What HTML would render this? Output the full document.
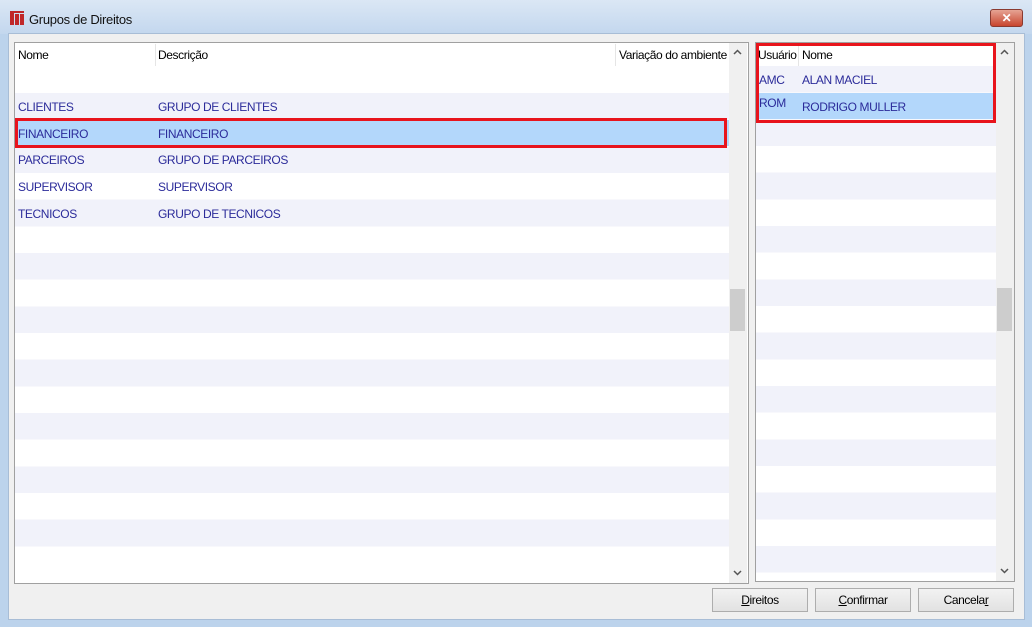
<!DOCTYPE html>
<html><head><meta charset="utf-8"><style>
*{margin:0;padding:0;box-sizing:border-box}
body{width:1032px;height:627px;overflow:hidden;background:#bcd3ec;font-family:"Liberation Sans",sans-serif;font-size:12px;position:relative;letter-spacing:-0.4px}
.a{position:absolute}
.title{left:0;top:0;width:1032px;height:34px;background:linear-gradient(#dbe7f5,#c3d7ee)}
.client{left:8px;top:33px;width:1017px;height:587px;background:#f0f0f0;border:1px solid #a8bdd6}
.grid{background:#fff;border:1px solid #a0a0a0}
.stripe{background:repeating-linear-gradient(#f1f2fa 0,#f1f2fa 26.67px,#fff 26.67px,#fff 53.33px)}
.t{position:absolute;color:#2b2b9a;font-size:12px;white-space:nowrap}
.h{position:absolute;color:#000;font-size:12px;white-space:nowrap}
.sb{background:#f0f0f0}
.thumb{background:#cdcdcd}
.btn{top:588px;height:24px;width:96px;background:linear-gradient(#f2f2f2,#e2e2e2);border:1px solid #adadad;text-align:center;line-height:22px;color:#000}
.red{border:3px solid #e8141c}
.sel{background:#b3d7fb}
</style></head><body>
<div class="a title"></div>
<div class="a" style="left:9px;top:10px;width:16px;height:16px">
<svg width="16" height="16"><rect x="1" y="1" width="4" height="14" fill="#c0282a"/><rect x="6" y="4" width="4" height="11" fill="#c0282a"/><rect x="11" y="4" width="4" height="11" fill="#c0282a"/><rect x="1" y="1" width="14" height="2" fill="#c0282a"/></svg></div>
<div class="a" style="left:29px;top:12px;font-size:13px;color:#111;letter-spacing:-0.3px">Grupos de Direitos</div>
<div class="a" style="left:990px;top:9px;width:33px;height:18px;border-radius:3px;background:linear-gradient(#e6a494,#c8452e);border:1px solid #8a3a30;color:#fff;text-align:center;font-weight:bold;font-size:12px;line-height:16px">✕</div>
<div class="a client"></div>

<div class="a grid" style="left:14px;top:42px;width:735px;height:542px"></div>
<div class="a stripe" style="left:15px;top:93px;width:714px;height:480px"></div>
<div class="a sel" style="left:15px;top:120px;width:714px;height:26px"></div>
<div class="a" style="left:155px;top:44px;width:1px;height:22px;background:#e5e5e5"></div>
<div class="a" style="left:615px;top:44px;width:1px;height:22px;background:#e5e5e5"></div>
<div class="h" style="left:18px;top:48px">Nome</div>
<div class="h" style="left:158px;top:48px">Descrição</div>
<div class="h" style="left:619px;top:48px">Variação do ambiente</div>
<div class="t" style="left:18px;top:100px">CLIENTES</div><div class="t" style="left:158px;top:100px">GRUPO DE CLIENTES</div>
<div class="t" style="left:18px;top:127px">FINANCEIRO</div><div class="t" style="left:158px;top:127px">FINANCEIRO</div>
<div class="t" style="left:18px;top:153px">PARCEIROS</div><div class="t" style="left:158px;top:153px">GRUPO DE PARCEIROS</div>
<div class="t" style="left:18px;top:180px">SUPERVISOR</div><div class="t" style="left:158px;top:180px">SUPERVISOR</div>
<div class="t" style="left:18px;top:207px">TECNICOS</div><div class="t" style="left:158px;top:207px">GRUPO DE TECNICOS</div>
<div class="a sb" style="left:729px;top:43px;width:18px;height:540px"></div>
<div class="a thumb" style="left:730px;top:289px;width:15px;height:42px"></div>
<svg class="a" style="left:733px;top:49px" width="9" height="6"><path d="M1 5L4.5 1.5L8 5" stroke="#555" stroke-width="1.5" fill="none"/></svg>
<svg class="a" style="left:733px;top:570px" width="9" height="6"><path d="M1 1L4.5 4.5L8 1" stroke="#555" stroke-width="1.5" fill="none"/></svg>
<div class="a red" style="left:15px;top:118px;width:712px;height:30px"></div>

<div class="a grid" style="left:755px;top:42px;width:260px;height:540px"></div>
<div class="a stripe" style="left:756px;top:66px;width:240px;height:507px"></div>
<div class="a sel" style="left:756px;top:93px;width:240px;height:26px"></div>
<div class="a" style="left:798px;top:44px;width:1px;height:22px;background:#e5e5e5"></div>
<div class="h" style="left:758px;top:48px">Usuário</div>
<div class="h" style="left:802px;top:48px">Nome</div>
<div class="t" style="left:759px;top:73px">AMC</div><div class="t" style="left:802px;top:73px">ALAN MACIEL</div>
<div class="t" style="left:759px;top:96px">ROM</div><div class="t" style="left:802px;top:100px">RODRIGO MULLER</div>
<div class="a sb" style="left:996px;top:43px;width:18px;height:538px"></div>
<div class="a thumb" style="left:997px;top:288px;width:15px;height:43px"></div>
<svg class="a" style="left:1000px;top:49px" width="9" height="6"><path d="M1 5L4.5 1.5L8 5" stroke="#555" stroke-width="1.5" fill="none"/></svg>
<svg class="a" style="left:1000px;top:568px" width="9" height="6"><path d="M1 1L4.5 4.5L8 1" stroke="#555" stroke-width="1.5" fill="none"/></svg>
<div class="a red" style="left:756px;top:43px;width:240px;height:80px"></div>

<div class="a btn" style="left:712px"><u>D</u>ireitos</div>
<div class="a btn" style="left:815px"><u>C</u>onfirmar</div>
<div class="a btn" style="left:918px">Cancela<u>r</u></div>
</body></html>
